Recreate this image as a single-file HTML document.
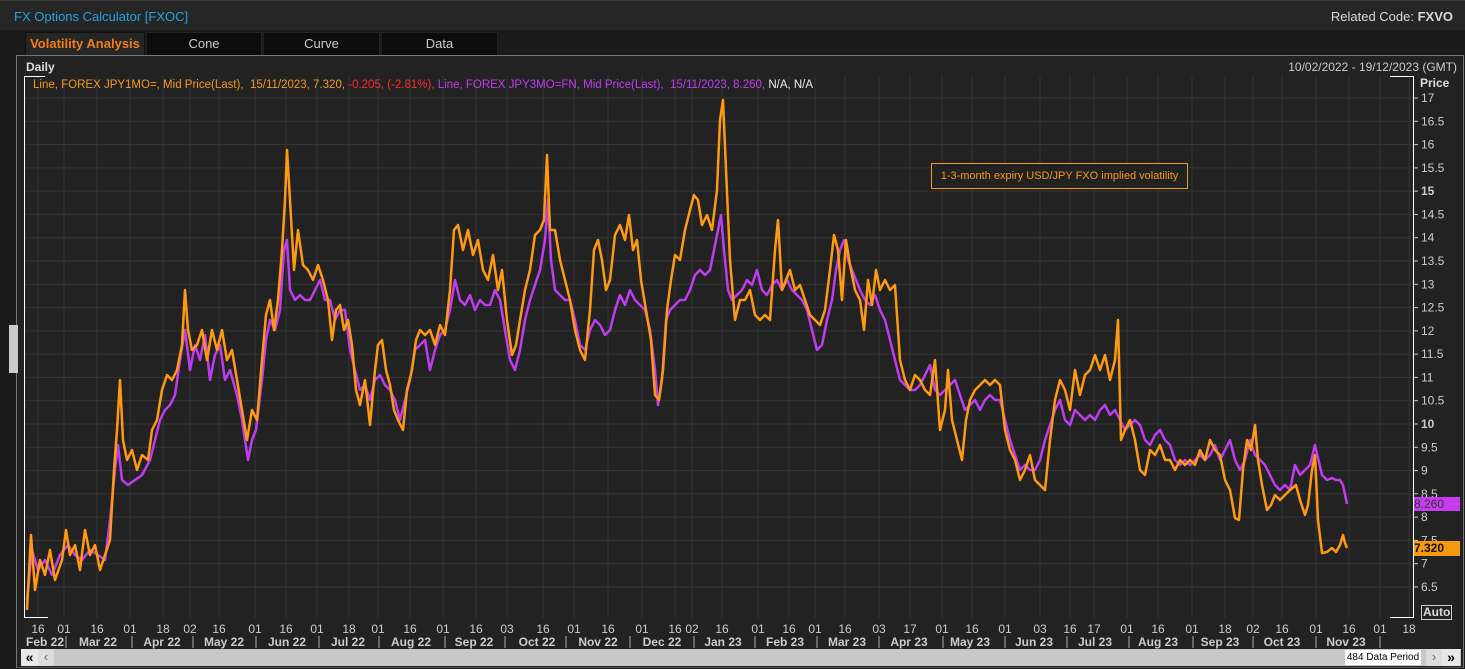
<!DOCTYPE html>
<html><head><meta charset="utf-8"><style>
html,body{margin:0;padding:0;background:#1a1a1a;width:1465px;height:669px;overflow:hidden;font-family:"Liberation Sans",sans-serif}
.t{position:absolute;white-space:nowrap}
</style></head><body>
<div class="t" style="left:0;top:0;width:1465px;height:29px;background:#262626;border-top:1px solid #3a3a3a"></div>
<div class="t" style="left:14px;top:9px;color:#1fa3e0;font-size:13px">FX Options Calculator [FXOC]</div>
<div class="t" style="right:12px;top:9px;color:#d8d8d8;font-size:13px">Related Code: <b>FXVO</b></div>
<div class="t" style="left:25px;top:32px;width:118px;height:22px;background:#262626;border:1px solid #111;color:#f07e14;font-size:13px;font-weight:bold;text-align:center;line-height:22px">Volatility Analysis</div>
<div class="t" style="left:146px;top:32px;width:114px;height:22px;background:#0c0c0c;border:1px solid #222;color:#ccc;font-size:13px;text-align:center;line-height:22px">Cone</div>
<div class="t" style="left:263px;top:32px;width:115px;height:22px;background:#0c0c0c;border:1px solid #222;color:#ccc;font-size:13px;text-align:center;line-height:22px">Curve</div>
<div class="t" style="left:381px;top:32px;width:115px;height:22px;background:#0c0c0c;border:1px solid #222;color:#ccc;font-size:13px;text-align:center;line-height:22px">Data</div>
<div class="t" style="left:16px;top:55px;width:1446px;height:611px;background:#222;border:1px solid #777;border-bottom-color:#555"></div>
<div class="t" style="left:9px;top:325px;width:9px;height:48px;background:#ccc"></div>
<div class="t" style="left:26px;top:60px;color:#ddd;font-size:12px;font-weight:bold">Daily</div>
<div class="t" style="right:8px;top:60px;color:#ccc;font-size:12px">10/02/2022 - 19/12/2023 (GMT)</div>
<svg id="s" class="t" style="left:0;top:0" width="1465" height="669" font-family="Liberation Sans, sans-serif"></svg>
<div class="t" style="left:33px;top:79px;font-size:11.5px;color:#f59a1a">Line, FOREX JPY1MO=, Mid Price(Last), &nbsp;15/11/2023, 7.320, <span style="color:#ff2a2a">-0.205, (-2.81%),</span> <span style="color:#c03cf0">Line, FOREX JPY3MO=FN, Mid Price(Last), &nbsp;15/11/2023, 8.260,</span> <span style="color:#eee">N/A, N/A</span></div>
<div class="t" style="left:931px;top:163px;width:255px;height:24px;border:1px solid #f59a1a;background:#222;color:#f59a1a;font-size:11px;text-align:center;line-height:24px">1-3-month expiry USD/JPY FXO implied volatility</div>
<div class="t" style="left:1420px;top:76px;color:#ddd;font-size:12px;font-weight:bold">Price</div>
<div class="t" style="left:1414px;top:497px;width:46px;height:14px;background:#c83cf0;color:#333;font-size:12px;line-height:14px">8.260</div>
<div class="t" style="left:1414px;top:541px;width:46px;height:15px;background:#f59a10;color:#111;font-size:12px;font-weight:bold;line-height:15px">7.320</div>
<div class="t" style="left:1421px;top:605px;border:1px solid #ccc;color:#ddd;font-size:12px;font-weight:bold;padding:0 1px;line-height:13px">Auto</div>
<div class="t" style="left:21px;top:649px;width:1440px;height:17px;background:#c8c8c8"></div>
<div class="t" style="left:21px;top:649px;width:17px;height:17px;background:#e8e8e8;color:#000;font-size:14px;font-weight:bold;text-align:center;line-height:16px">«</div>
<div class="t" style="left:38px;top:649px;width:16px;height:17px;background:#ddd;color:#666;font-size:13px;text-align:center;line-height:16px">‹</div>
<div class="t" style="left:1345px;top:650px;width:76px;height:15px;background:#fff;color:#000;font-size:10px;text-align:center;line-height:15px">484 Data Period</div>
<div class="t" style="left:1426px;top:649px;width:16px;height:17px;background:#ddd;color:#666;font-size:13px;text-align:center;line-height:16px">›</div>
<div class="t" style="left:1442px;top:649px;width:18px;height:17px;background:#e8e8e8;color:#000;font-size:14px;font-weight:bold;text-align:center;line-height:16px">»</div>
<script>
var s=document.getElementById('s'),h='';
function Y(v){return 98+(17-v)*46.57;}
h+='<rect x="24" y="76" width="1389" height="542" fill="#222"/>';
for(var v=6.5;v<=17.01;v+=0.5){var y=Y(v).toFixed(1);h+='<line x1="24" x2="1413" y1="'+y+'" y2="'+y+'" stroke="#343434"/>';h+='<line x1="1413" x2="1418" y1="'+y+'" y2="'+y+'" stroke="#ccc"/>';
var bold=(v==10||v==15);h+='<text x="1421" y="'+(+y+4)+'" fill="#ccc" font-size="12"'+(bold?' font-weight="bold"':'')+'>'+v+'</text>';}
var tk=[[38,'16'],[64,'01'],[97,'16'],[130,'01'],[163,'18'],[190,'02'],[219,'16'],[255,'01'],[286,'16'],[317,'01'],[349,'18'],[378,'01'],[410,'16'],[443,'01'],[476,'16'],[507,'03'],[543,'16'],[574,'01'],[608,'16'],[642,'01'],[675,'16'],[692,'02'],[722,'16'],[758,'01'],[789,'16'],[815,'01'],[845,'16'],[879,'03'],[910,'17'],[942,'01'],[972,'16'],[1005,'01'],[1040,'03'],[1070,'16'],[1094,'17'],[1127,'01'],[1158,'16'],[1192,'01'],[1225,'18'],[1253,'02'],[1282,'16'],[1316,'01'],[1349,'16'],[1380,'01'],[1409,'18']];
tk.forEach(function(t){h+='<line x1="'+t[0]+'" x2="'+t[0]+'" y1="76" y2="618" stroke="#343434"/>';h+='<text x="'+t[0]+'" y="633" fill="#ccc" font-size="12" text-anchor="middle">'+t[1]+'</text>';});
var mo=[[45,'Feb 22'],[98,'Mar 22'],[162,'Apr 22'],[224,'May 22'],[287,'Jun 22'],[348,'Jul 22'],[411,'Aug 22'],[474,'Sep 22'],[537,'Oct 22'],[598,'Nov 22'],[662,'Dec 22'],[723,'Jan 23'],[785,'Feb 23'],[847,'Mar 23'],[909,'Apr 23'],[970,'May 23'],[1034,'Jun 23'],[1095,'Jul 23'],[1158,'Aug 23'],[1220,'Sep 23'],[1282,'Oct 23'],[1346,'Nov 23']];
var sep=[66,132,193,256,319,379,445,505,566,630,694,755,817,879,943,1005,1067,1129,1193,1253,1316,1380];
sep.forEach(function(x){h+='<line x1="'+x+'" x2="'+x+'" y1="636" y2="648" stroke="#aaa"/>';});
mo.forEach(function(t){h+='<text x="'+t[0]+'" y="646" fill="#ccc" font-size="12" font-weight="bold" text-anchor="middle">'+t[1]+'</text>';});
h+='<line x1="1413.5" x2="1413.5" y1="76" y2="618" stroke="#fff"/><line x1="1390" x2="1413" y1="76.5" y2="76.5" stroke="#fff"/><line x1="1390" x2="1413" y1="617.5" y2="617.5" stroke="#fff"/>';
h+='<line x1="24.5" x2="24.5" y1="76" y2="618" stroke="#fff"/><line x1="24" x2="45" y1="76.5" y2="76.5" stroke="#fff"/><line x1="24" x2="48" y1="617.5" y2="617.5" stroke="#fff"/>';
var P="27,600 32,550 38,570 45,560 52,575 60,555 68,545 75,555 82,560 90,550 98,555 105,560 110,520 115,470 118,445 122,480 128,485 135,480 142,475 150,460 155,440 160,420 165,410 170,405 175,395 180,360 185,330 190,370 195,345 200,360 205,335 210,380 215,355 220,345 225,380 230,370 237,395 242,420 248,460 252,440 256,430 262,380 266,340 270,320 275,330 280,310 284,250 287,240 290,290 295,300 300,295 305,300 310,300 315,290 320,280 325,300 330,300 335,320 340,310 345,310 350,350 355,370 360,390 365,385 370,400 375,380 380,375 385,385 390,390 395,400 400,420 405,400 410,380 415,350 420,345 425,340 430,370 435,350 440,335 445,330 450,310 455,280 460,300 465,305 470,295 475,310 480,300 485,305 490,305 495,290 500,300 505,330 510,360 515,370 520,350 525,320 530,300 535,285 540,270 545,240 548,200 551,260 555,290 560,295 565,300 570,300 575,320 580,345 585,350 590,330 595,320 600,325 605,335 610,330 615,310 620,295 625,305 630,290 635,300 640,305 645,310 650,330 655,370 658,405 662,380 666,320 670,310 675,305 680,300 685,300 690,290 695,275 700,270 705,275 710,270 714,250 718,230 721,215 724,250 728,290 732,300 737,295 742,290 747,280 752,285 757,270 762,290 767,295 772,285 777,280 782,290 787,280 792,290 797,295 802,300 807,310 812,330 817,350 822,345 827,320 832,300 836,270 840,250 844,240 848,260 852,270 856,280 860,290 865,300 870,305 875,295 880,310 885,320 890,340 895,360 900,380 905,385 910,390 915,390 920,385 925,375 930,365 935,390 940,395 945,390 950,385 955,380 960,395 965,410 970,405 975,400 980,410 985,400 990,395 995,400 1000,400 1005,420 1010,440 1015,455 1020,470 1025,465 1030,470 1035,470 1040,460 1045,440 1050,425 1055,410 1060,400 1065,420 1070,425 1075,410 1080,415 1085,420 1090,415 1095,420 1100,410 1105,405 1110,415 1115,410 1120,420 1125,430 1130,425 1135,420 1140,425 1145,440 1150,445 1155,435 1160,430 1165,440 1170,445 1175,460 1180,465 1185,460 1190,465 1195,460 1200,455 1205,460 1210,455 1215,445 1220,460 1225,450 1230,440 1235,460 1240,470 1245,460 1250,440 1255,455 1260,460 1265,465 1270,475 1275,485 1280,490 1285,485 1290,490 1295,465 1300,475 1305,470 1310,465 1315,445 1318,458 1322,475 1327,480 1332,478 1336,480 1340,480 1343,485 1347,504";
var O="27,610 31,535 35,590 40,560 45,575 50,550 55,580 62,560 66,530 70,555 75,545 80,570 85,530 90,555 95,545 100,570 105,555 110,540 114,470 117,430 120,380 123,440 127,460 132,450 137,470 142,455 148,460 152,430 157,420 162,390 167,375 172,380 177,370 182,345 185,290 188,330 192,350 197,345 202,330 207,360 212,330 217,350 222,330 227,360 232,350 237,380 242,410 247,440 252,410 257,420 262,360 266,315 270,300 274,330 278,300 282,250 285,200 287,150 290,200 294,270 298,230 303,265 308,270 313,280 318,265 323,280 328,300 332,340 336,310 340,305 344,330 348,320 352,345 356,390 360,405 365,380 370,425 375,370 378,345 382,340 386,370 390,385 394,410 398,420 403,430 407,390 412,370 416,340 420,330 425,335 430,330 435,345 440,325 445,335 450,290 454,230 458,225 463,250 468,230 473,255 478,240 483,270 488,280 493,255 498,290 502,270 507,320 512,355 516,345 520,320 525,290 530,270 535,235 540,230 544,220 547,155 550,230 555,230 560,260 565,280 570,300 575,330 580,350 585,360 590,310 594,250 598,240 602,260 606,290 610,280 615,235 620,225 625,240 629,215 633,250 637,240 641,280 646,310 651,340 655,395 659,400 663,370 667,310 671,280 675,255 680,260 685,230 690,210 694,195 698,200 702,225 707,215 712,230 717,190 720,120 723,100 726,170 730,260 735,320 740,300 745,300 750,290 755,315 760,320 765,315 770,320 775,250 778,220 782,290 786,280 790,270 795,290 800,285 805,300 810,315 815,320 820,325 825,310 830,270 834,235 838,250 842,300 846,240 850,265 855,290 860,300 864,330 868,280 872,305 876,270 880,290 885,280 890,290 895,285 900,360 905,380 910,390 915,375 920,380 925,390 930,395 935,360 940,430 945,410 948,370 952,420 957,440 962,460 966,420 970,400 975,390 980,385 985,380 990,385 995,380 1000,385 1005,430 1010,450 1015,460 1020,480 1025,470 1030,455 1035,480 1040,485 1045,490 1050,440 1055,400 1060,380 1065,390 1070,410 1075,370 1080,395 1085,375 1090,370 1095,355 1100,370 1105,355 1110,380 1115,360 1118,320 1121,440 1125,430 1130,420 1135,440 1140,470 1145,475 1150,450 1155,455 1160,445 1165,460 1170,460 1175,470 1180,460 1185,465 1190,460 1195,465 1200,450 1205,460 1210,440 1215,450 1220,455 1225,480 1230,490 1235,518 1239,520 1243,470 1247,440 1251,450 1255,425 1258,460 1262,485 1267,510 1271,505 1275,495 1280,500 1285,495 1290,490 1296,485 1300,500 1305,515 1308,505 1312,470 1315,455 1318,520 1322,553 1327,552 1332,548 1336,552 1340,545 1343,535 1345,543 1347,548";
h+='<polyline points="'+P+'" fill="none" stroke="#c03cf0" stroke-width="2.5" stroke-linejoin="round"/>';
h+='<polyline points="'+O+'" fill="none" stroke="#ff9a10" stroke-width="2.5" stroke-linejoin="round"/>';
s.innerHTML=h;
</script>
</body></html>
